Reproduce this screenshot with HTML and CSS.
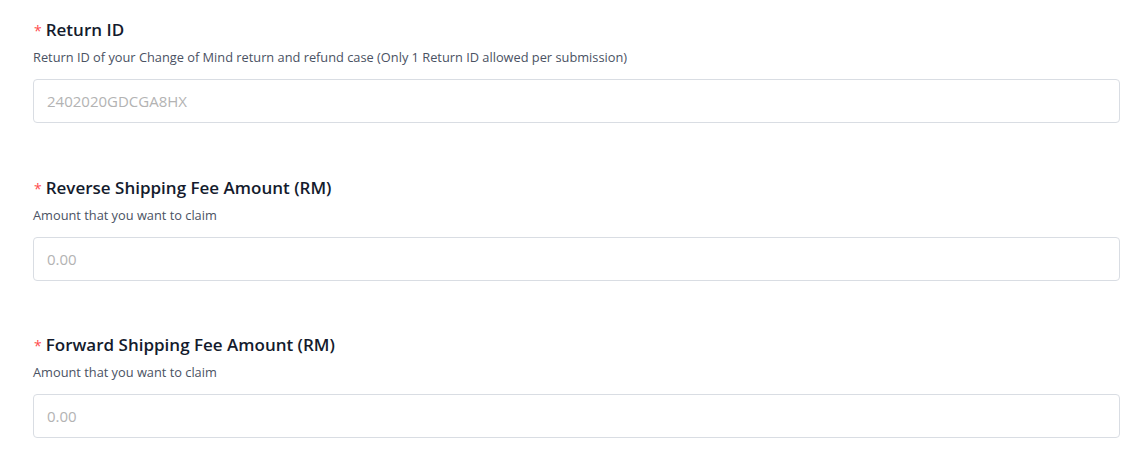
FILE: index.html
```html
<!DOCTYPE html>
<html lang="en">
<head>
    <meta charset="UTF-8">
    <meta name="viewport" content="width=device-width, initial-scale=1.0">
    <title>Claim Form</title>
    <link rel="stylesheet" href="styles.css">
</head>
<body>
    <form id="claimForm">
        <div class="field">
            <label for="returnId"><span class="req">*</span>Return ID</label>
            <div class="hint">Return ID of your Change of Mind return and refund case (Only 1 Return ID allowed per submission)</div>
            <input type="text" id="returnId" name="returnId" placeholder="2402020GDCGA8HX">
        </div>

        <div class="field">
            <label for="reverseFee"><span class="req">*</span>Reverse Shipping Fee Amount (RM)</label>
            <div class="hint">Amount that you want to claim</div>
            <input type="text" id="reverseFee" name="reverseFee" placeholder="0.00">
        </div>

        <div class="field">
            <label for="forwardFee"><span class="req">*</span>Forward Shipping Fee Amount (RM)</label>
            <div class="hint">Amount that you want to claim</div>
            <input type="text" id="forwardFee" name="forwardFee" placeholder="0.00">
        </div>
    </form>
</body>
</html>
```

FILE: styles.css
```css
body {
    font-family: "Open Sans", "Noto Sans", sans-serif;
    background-color: #fff;
    margin: 0;
    padding: 18px 21px 0 33px;
}

#claimForm {
    display: flex;
    flex-direction: column;
    gap: 52.5px;
}

.field label {
    display: block;
    font-size: 17px;
    font-weight: 600;
    line-height: 24px;
    color: #141b2d;
}

.field .req {
    color: #ff4d4f;
    font-weight: 400;
    font-size: 14px;
    margin-right: 4px;
    margin-left: 1px;
}

.field .hint {
    margin-top: 4px;
    font-size: 12.8px;
    line-height: 20px;
    color: #4a5263;
}

.field input[type="text"] {
    display: block;
    width: 100%;
    height: 44px;
    margin-top: 12px;
    padding: 0 13px;
    border: 1px solid #d9dde3;
    border-radius: 4px;
    box-sizing: border-box;
    font-family: inherit;
    font-size: 15px;
    color: #333;
}

.field input::placeholder {
    color: #b3b3b3;
}
```
